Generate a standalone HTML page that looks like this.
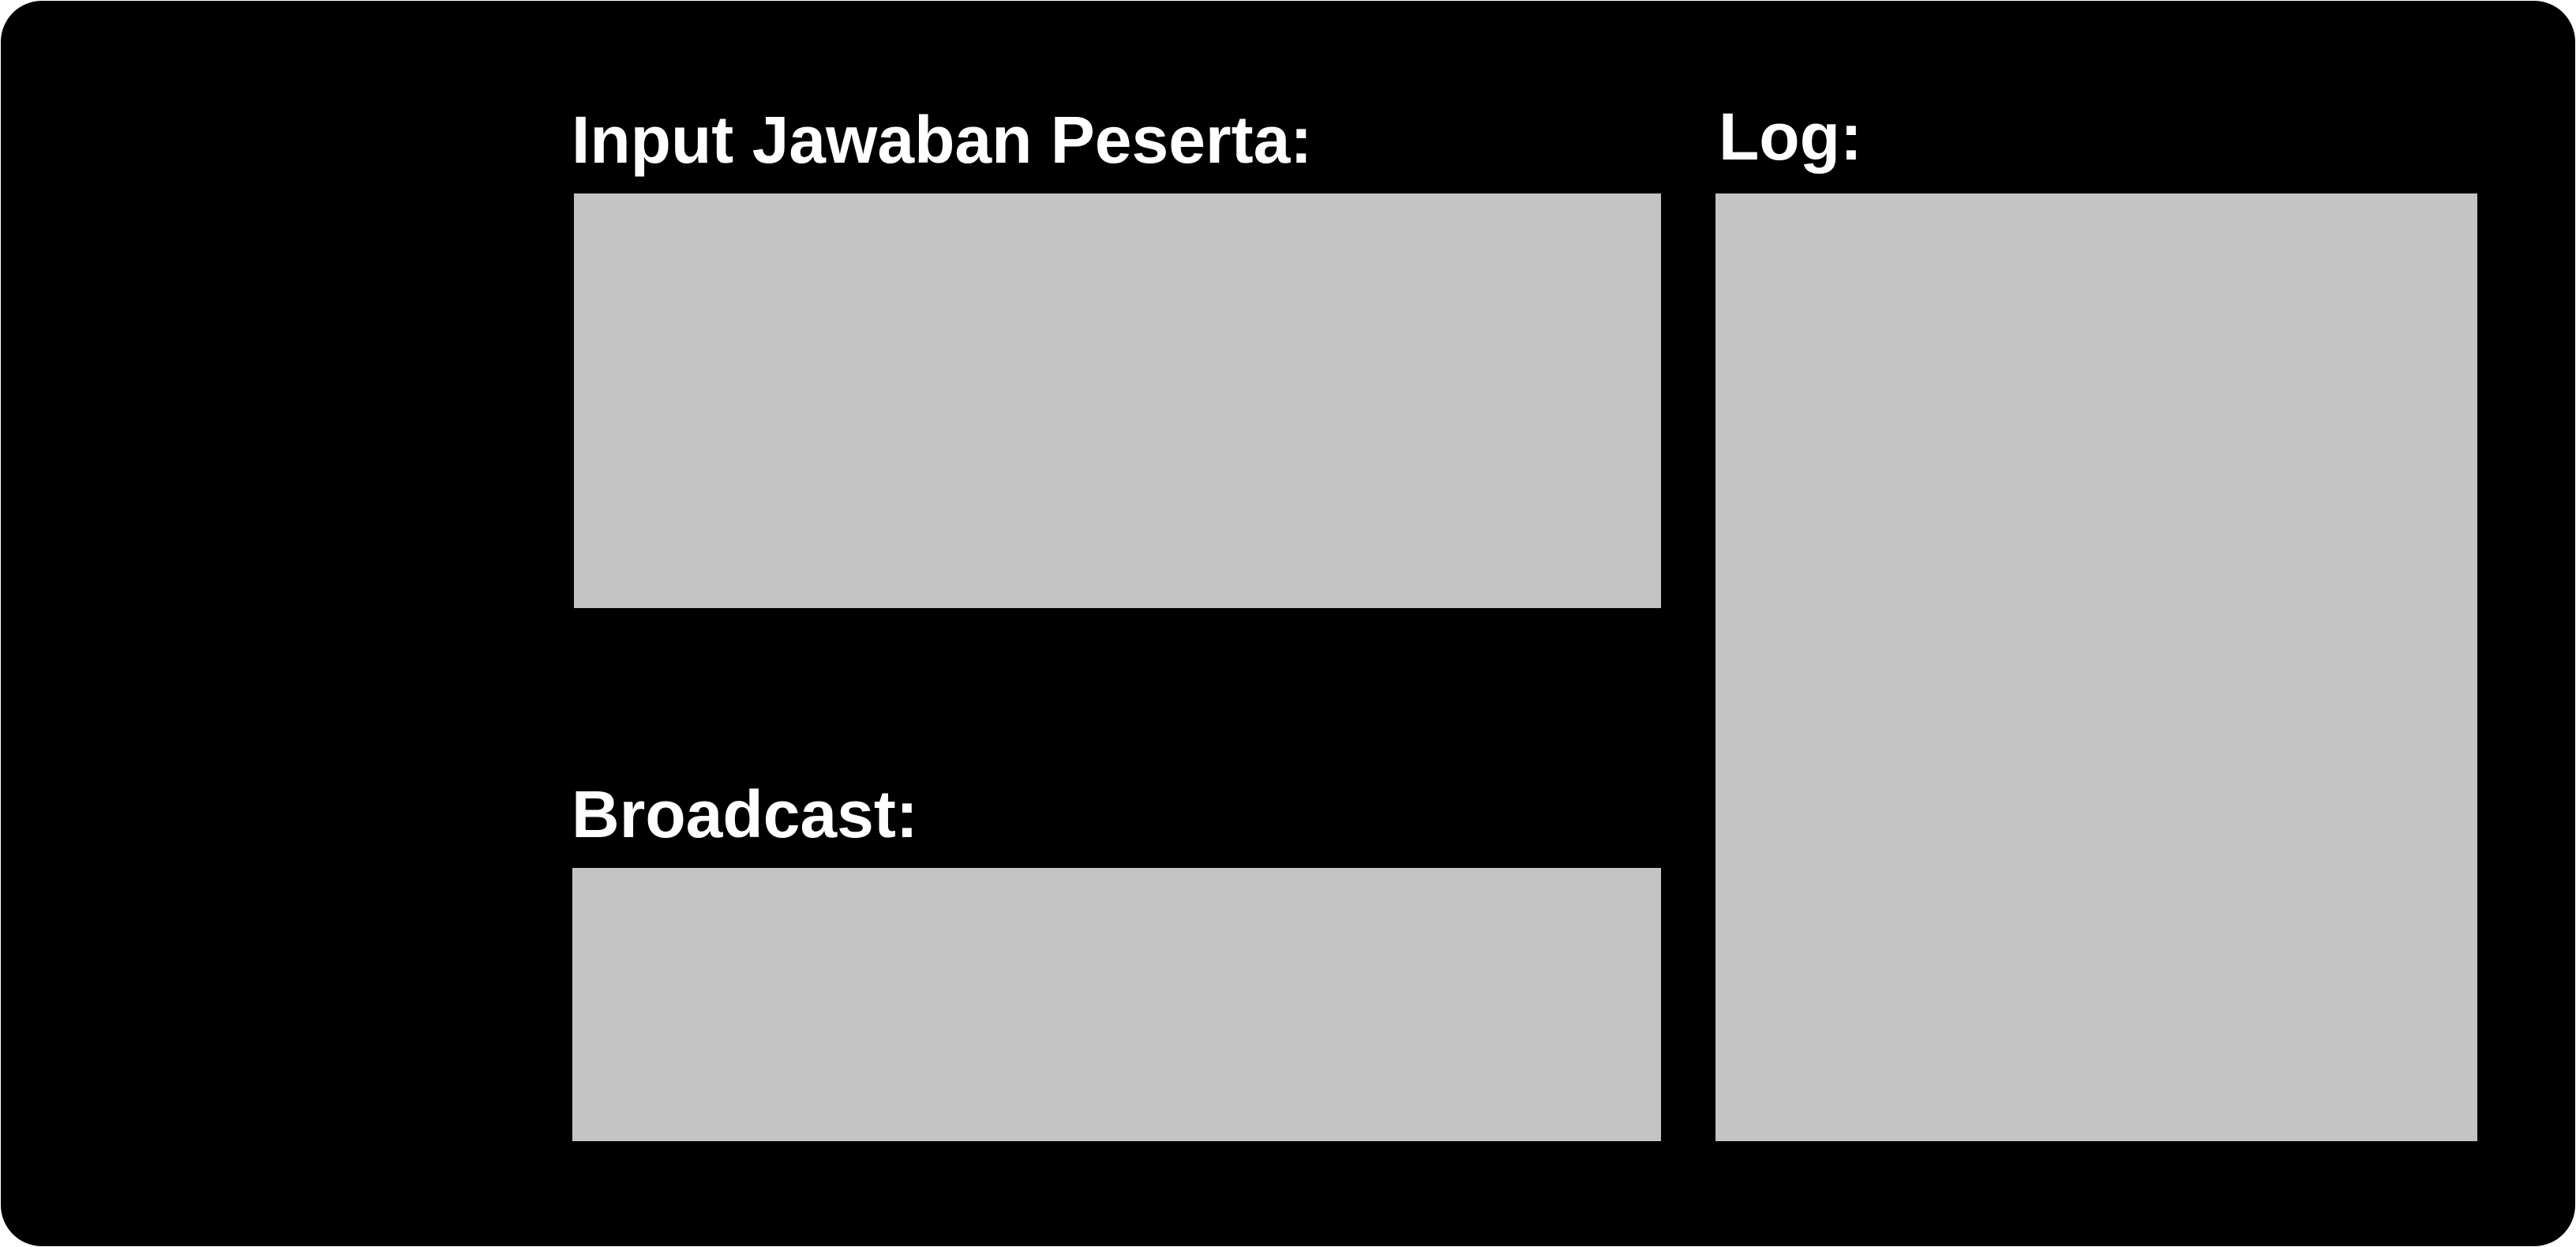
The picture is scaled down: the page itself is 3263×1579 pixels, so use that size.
<!DOCTYPE html>
<html><head><style>
html,body{margin:0;padding:0;width:3263px;height:1579px;background:#fff;overflow:hidden}
.frame{position:absolute;left:1px;top:1px;width:3261px;height:1577px;background:#000;border-radius:52px}
.box{position:absolute;background:#c4c4c4}
.lbl{position:absolute;color:#fff;font-family:"Liberation Sans",sans-serif;font-weight:bold;font-size:84px;line-height:1;white-space:nowrap}
</style></head><body>
<div class="frame"></div>
<div class="lbl" style="left:724px;top:135px">Input Jawaban Peserta:</div>
<div class="lbl" style="left:2177px;top:131px">Log:</div>
<div class="lbl" style="left:724px;top:989px">Broadcast:</div>
<div class="box" style="left:727px;top:245px;width:1377px;height:525px"></div>
<div class="box" style="left:725px;top:1099px;width:1379px;height:346px"></div>
<div class="box" style="left:2173px;top:245px;width:965px;height:1200px"></div>
</body></html>
